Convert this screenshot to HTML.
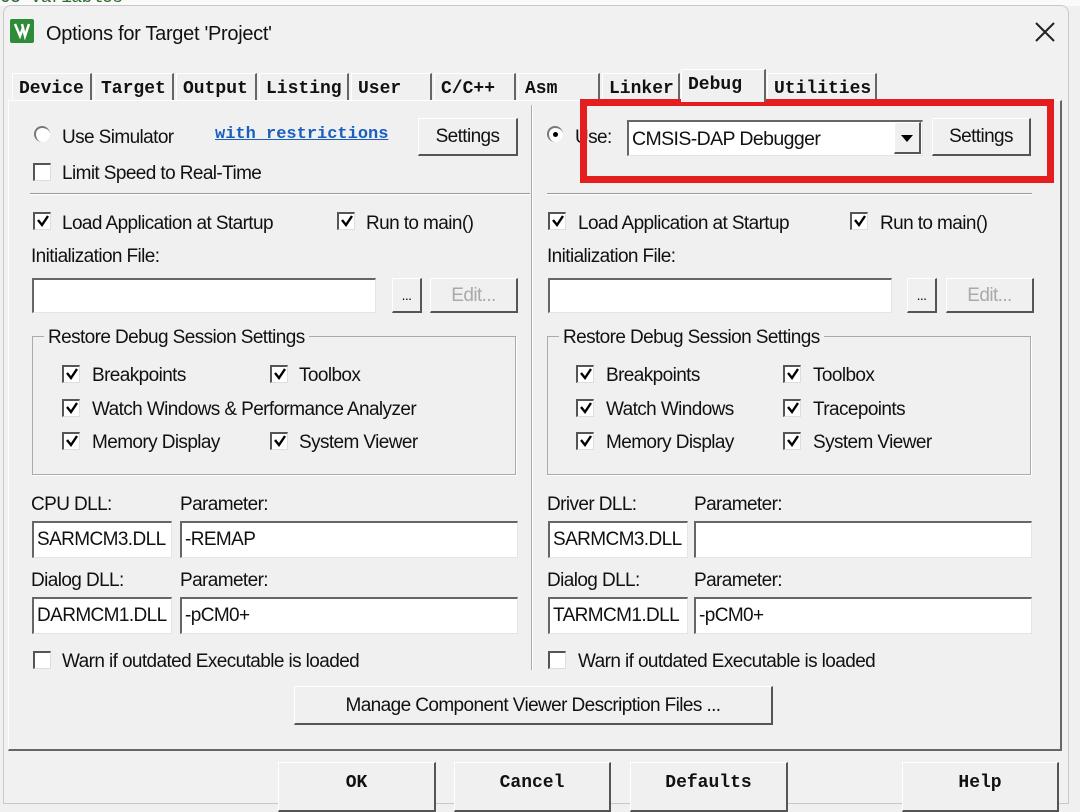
<!DOCTYPE html>
<html><head><meta charset="utf-8"><style>
*{box-sizing:border-box;margin:0;padding:0}
body{width:1080px;height:804px;overflow:hidden;background:#f0f0f0;position:relative;font-family:"Liberation Sans",Arial,sans-serif;font-size:19px;color:#111;letter-spacing:-0.6px}
.a{position:absolute;white-space:nowrap}
.t{position:absolute;white-space:nowrap;line-height:20px;transform:translateY(-8px)}
.cb{position:absolute;width:18px;height:18px;background:#fff;border-top:2px solid #555;border-left:2px solid #555;border-right:1px solid #ddd;border-bottom:1px solid #ddd}
.cb svg{position:absolute;left:1px;top:0}
.tb{position:absolute;background:#fff;border-top:2px solid #666;border-left:2px solid #666;border-right:1px solid #e4e4e4;border-bottom:1px solid #e4e4e4;padding-left:3px;line-height:34px}
.bt{position:absolute;background:#f0f0f0;border-top:1px solid #fff;border-left:1px solid #fff;border-right:2px solid #555;border-bottom:2px solid #555;text-align:center}
.tab{position:absolute;top:73px;height:28px;font-family:"Liberation Mono",monospace;font-size:18px;font-weight:bold;letter-spacing:0;line-height:30px;padding-left:6px;border-right:2px solid #666;border-left:1px solid #fff;border-top:1px solid #fff;background:#f0f0f0}
.mono{font-family:"Liberation Mono",monospace;font-weight:bold;letter-spacing:0}
</style></head><body>
<div class="a" style="left:0;top:0;width:1080px;height:6px;background:#fafafa"></div>
<div class="a" style="left:0;top:-12px;font-family:'Liberation Mono';font-size:18px;color:#2a6a2a">05 variables</div>
<div class="a" style="left:3px;top:5px;width:1066px;height:799px;background:#f2f1f1;border:1px solid #c8c8c8;border-radius:8px 8px 0 0"></div>
<div class="a" style="left:10px;top:19px;width:24px;height:24px;background:#2e8b3a;border-radius:2px"><svg width="24" height="24"><path d="M5 5 L10 17 L13 9 M12 5 L15 17 L19 5" stroke="#fff" stroke-width="2.5" fill="none"/></svg></div>
<div class="t" style="left:46px;top:32px;font-size:20px;letter-spacing:-0.3px">Options for Target 'Project'</div>
<svg class="a" style="left:1034px;top:21px" width="22" height="22"><path d="M2 2L20 20M20 2L2 20" stroke="#222" stroke-width="2"/></svg>
<div class="tab" style="left:12px;width:80px">Device</div>
<div class="tab" style="left:94px;width:80px">Target</div>
<div class="tab" style="left:176px;width:81px">Output</div>
<div class="tab" style="left:259px;width:90px">Listing</div>
<div class="tab" style="left:351px;width:81px">User</div>
<div class="tab" style="left:434px;width:82px">C/C++</div>
<div class="tab" style="left:518px;width:82px">Asm</div>
<div class="tab" style="left:602px;width:78px">Linker</div>
<div class="tab" style="left:767px;width:110px">Utilities</div>
<div class="a" style="left:8px;top:100px;width:1054px;height:651px;border-top:1px solid #fff;border-left:1px solid #fff;border-right:2px solid #666;border-bottom:2px solid #666;background:#f0f0f0"></div>
<div class="tab" style="left:681px;top:69px;height:33px;width:85px;border-bottom:none;line-height:30px;z-index:2">Debug</div>
<div class="a" style="left:531px;top:105px;width:2px;height:565px;border-left:1px solid #aaa;border-right:1px solid #fff"></div>
<!-- LEFT -->
<div class="a" style="left:34px;top:126px;width:16px;height:16px;border-radius:50%;background:#fff;border-top:2px solid #777;border-left:2px solid #777"></div>
<div class="t" style="left:62px;top:136px">Use Simulator</div>
<div class="t mono" style="left:215px;top:133px;font-size:17px;color:#1a5fc0;text-decoration:underline">with restrictions</div>
<div class="bt" style="left:418px;top:118px;width:100px;height:38px;line-height:36px">Settings</div>
<div class="cb" style="left:33px;top:163px"></div>
<div class="t" style="left:62px;top:172px">Limit Speed to Real-Time</div>
<div class="a" style="left:30px;top:193px;width:500px;height:2px;border-top:1px solid #999;border-bottom:1px solid #fff"></div>
<div class="cb" style="left:33px;top:212px"><svg width="14" height="14"><path d="M2 6L6 11L12 2" stroke="#000" stroke-width="2.4" fill="none"/></svg></div>
<div class="t" style="left:62px;top:222px">Load Application at Startup</div>
<div class="cb" style="left:337px;top:212px"><svg width="14" height="14"><path d="M2 6L6 11L12 2" stroke="#000" stroke-width="2.4" fill="none"/></svg></div>
<div class="t" style="left:366px;top:222px">Run to main()</div>
<div class="t" style="left:31px;top:255px">Initialization File:</div>
<div class="tb" style="left:32px;top:278px;width:344px;height:35px"></div>
<div class="bt" style="left:392px;top:278px;width:30px;height:35px;line-height:32px;font-size:14px">...</div>
<div class="bt" style="left:430px;top:278px;width:88px;height:35px;line-height:34px;color:#aaa">Edit...</div>
<div class="a" style="left:32px;top:336px;width:484px;height:139px;border:1px solid #aaa;box-shadow:1px 1px 0 #fff"></div>
<div class="t" style="left:44px;top:336px;background:#f0f0f0;padding:0 4px">Restore Debug Session Settings</div>
<div class="cb" style="left:62px;top:365px"><svg width="14" height="14"><path d="M2 6L6 11L12 2" stroke="#000" stroke-width="2.4" fill="none"/></svg></div>
<div class="t" style="left:92px;top:374px">Breakpoints</div>
<div class="cb" style="left:270px;top:365px"><svg width="14" height="14"><path d="M2 6L6 11L12 2" stroke="#000" stroke-width="2.4" fill="none"/></svg></div>
<div class="t" style="left:299px;top:374px">Toolbox</div>
<div class="cb" style="left:62px;top:399px"><svg width="14" height="14"><path d="M2 6L6 11L12 2" stroke="#000" stroke-width="2.4" fill="none"/></svg></div>
<div class="t" style="left:92px;top:408px">Watch Windows &amp; Performance Analyzer</div>
<div class="cb" style="left:62px;top:432px"><svg width="14" height="14"><path d="M2 6L6 11L12 2" stroke="#000" stroke-width="2.4" fill="none"/></svg></div>
<div class="t" style="left:92px;top:441px">Memory Display</div>
<div class="cb" style="left:270px;top:432px"><svg width="14" height="14"><path d="M2 6L6 11L12 2" stroke="#000" stroke-width="2.4" fill="none"/></svg></div>
<div class="t" style="left:299px;top:441px">System Viewer</div>
<div class="t" style="left:31px;top:503px">CPU DLL:</div>
<div class="t" style="left:180px;top:503px">Parameter:</div>
<div class="tb" style="left:32px;top:521px;width:140px;height:37px">SARMCM3.DLL</div>
<div class="tb" style="left:180px;top:521px;width:338px;height:37px">-REMAP</div>
<div class="t" style="left:31px;top:579px">Dialog DLL:</div>
<div class="t" style="left:180px;top:579px">Parameter:</div>
<div class="tb" style="left:32px;top:597px;width:140px;height:37px">DARMCM1.DLL</div>
<div class="tb" style="left:180px;top:597px;width:338px;height:37px">-pCM0+</div>
<div class="cb" style="left:33px;top:651px"></div>
<div class="t" style="left:62px;top:660px">Warn if outdated Executable is loaded</div>
<!-- RIGHT -->
<div class="a" style="left:547px;top:126px;width:16px;height:16px;border-radius:50%;background:#fff;border-top:2px solid #777;border-left:2px solid #777"><div class="a" style="left:4px;top:4px;width:5px;height:5px;border-radius:50%;background:#000"></div></div>
<div class="t" style="left:575px;top:136px">Use:</div>
<div class="tb" style="left:627px;top:120px;width:296px;height:36px;line-height:34px;font-size:19.5px">CMSIS-DAP Debugger</div>
<div class="bt" style="left:894px;top:122px;width:27px;height:32px"><svg width="14" height="10" style="margin-top:11px"><path d="M1 1H13L7 8Z" fill="#000"/></svg></div>
<div class="bt" style="left:932px;top:118px;width:99px;height:38px;line-height:36px">Settings</div>
<div class="a" style="left:580px;top:99px;width:474px;height:84px;border:7px solid #e41e1e"></div>
<div class="a" style="left:547px;top:193px;width:485px;height:2px;border-top:1px solid #999;border-bottom:1px solid #fff"></div>
<div class="cb" style="left:548px;top:212px"><svg width="14" height="14"><path d="M2 6L6 11L12 2" stroke="#000" stroke-width="2.4" fill="none"/></svg></div>
<div class="t" style="left:578px;top:222px">Load Application at Startup</div>
<div class="cb" style="left:850px;top:212px"><svg width="14" height="14"><path d="M2 6L6 11L12 2" stroke="#000" stroke-width="2.4" fill="none"/></svg></div>
<div class="t" style="left:880px;top:222px">Run to main()</div>
<div class="t" style="left:547px;top:255px">Initialization File:</div>
<div class="tb" style="left:548px;top:278px;width:344px;height:35px"></div>
<div class="bt" style="left:907px;top:278px;width:30px;height:35px;line-height:32px;font-size:14px">...</div>
<div class="bt" style="left:946px;top:278px;width:88px;height:35px;line-height:34px;color:#aaa">Edit...</div>
<div class="a" style="left:547px;top:336px;width:484px;height:139px;border:1px solid #aaa;box-shadow:1px 1px 0 #fff"></div>
<div class="t" style="left:559px;top:336px;background:#f0f0f0;padding:0 4px">Restore Debug Session Settings</div>
<div class="cb" style="left:576px;top:365px"><svg width="14" height="14"><path d="M2 6L6 11L12 2" stroke="#000" stroke-width="2.4" fill="none"/></svg></div>
<div class="t" style="left:606px;top:374px">Breakpoints</div>
<div class="cb" style="left:783px;top:365px"><svg width="14" height="14"><path d="M2 6L6 11L12 2" stroke="#000" stroke-width="2.4" fill="none"/></svg></div>
<div class="t" style="left:813px;top:374px">Toolbox</div>
<div class="cb" style="left:576px;top:399px"><svg width="14" height="14"><path d="M2 6L6 11L12 2" stroke="#000" stroke-width="2.4" fill="none"/></svg></div>
<div class="t" style="left:606px;top:408px">Watch Windows</div>
<div class="cb" style="left:783px;top:399px"><svg width="14" height="14"><path d="M2 6L6 11L12 2" stroke="#000" stroke-width="2.4" fill="none"/></svg></div>
<div class="t" style="left:813px;top:408px">Tracepoints</div>
<div class="cb" style="left:576px;top:432px"><svg width="14" height="14"><path d="M2 6L6 11L12 2" stroke="#000" stroke-width="2.4" fill="none"/></svg></div>
<div class="t" style="left:606px;top:441px">Memory Display</div>
<div class="cb" style="left:783px;top:432px"><svg width="14" height="14"><path d="M2 6L6 11L12 2" stroke="#000" stroke-width="2.4" fill="none"/></svg></div>
<div class="t" style="left:813px;top:441px">System Viewer</div>
<div class="t" style="left:547px;top:503px">Driver DLL:</div>
<div class="t" style="left:694px;top:503px">Parameter:</div>
<div class="tb" style="left:548px;top:521px;width:140px;height:37px">SARMCM3.DLL</div>
<div class="tb" style="left:694px;top:521px;width:338px;height:37px"></div>
<div class="t" style="left:547px;top:579px">Dialog DLL:</div>
<div class="t" style="left:694px;top:579px">Parameter:</div>
<div class="tb" style="left:548px;top:597px;width:140px;height:37px">TARMCM1.DLL</div>
<div class="tb" style="left:694px;top:597px;width:338px;height:37px">-pCM0+</div>
<div class="cb" style="left:548px;top:651px"></div>
<div class="t" style="left:578px;top:660px">Warn if outdated Executable is loaded</div>
<!-- bottom -->
<div class="bt" style="left:294px;top:686px;width:479px;height:39px;line-height:38px">Manage Component Viewer Description Files ...</div>
<div class="bt mono" style="left:278px;top:762px;width:158px;height:50px;line-height:40px;font-size:18px">OK</div>
<div class="bt mono" style="left:454px;top:762px;width:157px;height:50px;line-height:40px;font-size:18px">Cancel</div>
<div class="bt mono" style="left:630px;top:762px;width:158px;height:50px;line-height:40px;font-size:18px">Defaults</div>
<div class="bt mono" style="left:902px;top:762px;width:157px;height:50px;line-height:40px;font-size:18px">Help</div>
</body></html>
